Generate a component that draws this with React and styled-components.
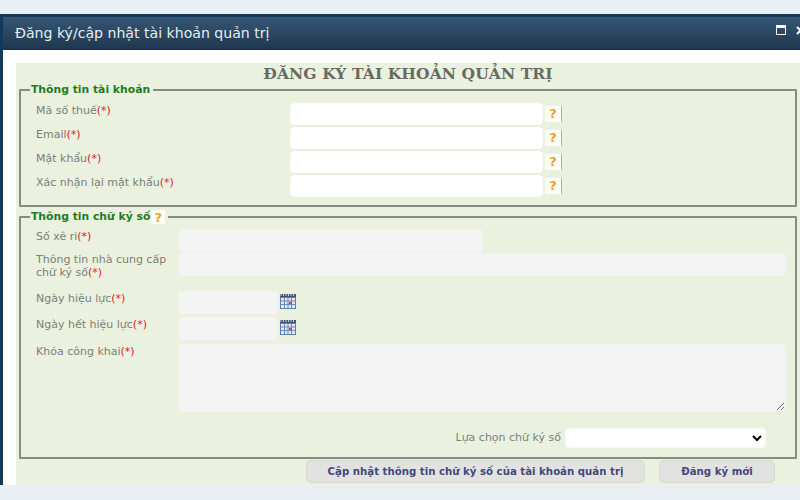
import React from "react"
import styled, { createGlobalStyle } from "styled-components"

const GlobalStyle = createGlobalStyle`
  html, body {
    margin: 0;
    padding: 0;
    height: 500px;
    overflow: hidden;
    background: #e9eff3;
  }
  body {
    font-family: "DejaVu Sans", "Noto Sans", sans-serif;
  }
`

const Page = styled.div`
  width: 800px;
  height: 500px;
  padding-top: 14px;
  box-sizing: border-box;
  overflow: hidden;
`

const Dialog = styled.div`
  width: 830px;
  height: 471px;
  box-sizing: border-box;
  background: #fff;
  border-top: 3px solid #123a5c;
  border-left: 3px solid #123a5c;
  display: flex;
  flex-direction: column;
`

const TitleBar = styled.div`
  height: 33px;
  flex: none;
  display: flex;
  align-items: center;
  padding: 0 0 0 12px;
  box-sizing: border-box;
  background: linear-gradient(#365675, #1f3850);
  border-bottom: 1px solid #1a2f44;
  color: #e8edf2;
  font-family: "DejaVu Sans", sans-serif;
  font-size: 14.1px;
`

const TitleText = styled.span`
  flex: 1;
`

const WindowIcons = styled.div`
  width: 54px;
  display: flex;
  align-items: center;
  gap: 10px;
  margin-top: -6px;
  color: #fff;
`

const Body = styled.div`
  flex: 1;
  padding: 13px 0 0 13px;
  min-height: 0;
`

const Panel = styled.div`
  width: 784px;
  height: 422px;
  box-sizing: border-box;
  background: #eaf1de;
  padding: 0 3px;
`

const Heading = styled.h1`
  margin: 0;
  height: 20px;
  text-align: center;
  font-family: "DejaVu Serif", serif;
  font-weight: bold;
  font-size: 15.5px;
  line-height: 22px;
  letter-spacing: 0.1px;
  color: #666b63;
`

const Group = styled.fieldset`
  margin: 0 0 ${p => p.$gap || 0}px 0;
  padding: 0 0 0 15px;
  width: 778px;
  height: ${p => p.$height}px;
  box-sizing: border-box;
  border: 2px solid #858b7d;
  border-radius: 1px;
  min-inline-size: 0;
`

const Legend = styled.legend`
  margin-left: -6px;
  padding: 0 3px 0 1px;
  font-size: 10.8px;
  font-weight: bold;
  line-height: 14px;
  color: #1d7d22;
  display: flex;
  align-items: center;
`

const Label = styled.label`
  display: block;
  color: #7b7f78;
  font-size: 11px;
  line-height: 13px;
`

const Req = styled.span`
  color: #e0202a;
`

const AccountRow = styled.div`
  display: grid;
  grid-template-columns: 254px 253px 17px;
  height: ${p => p.$height || 24}px;
  align-items: start;
`

const AccountRows = styled.div`
  padding-top: 6px;
`

const RowLabel = styled(Label)`
  padding-top: 1px;
`

const TextBox = styled.input`
  display: block;
  box-sizing: border-box;
  width: ${p => p.$width || 253}px;
  height: ${p => p.$height || 22}px;
  border: 1px solid ${p => (p.disabled ? "#f3f4f3" : "#fbfcfa")};
  border-radius: 4px;
  background: ${p => (p.disabled ? "#f3f4f3" : "#fff")};
  padding: 0 4px;
  outline: none;
`

const Help = styled.span`
  display: block;
  box-sizing: border-box;
  width: ${p => p.$width || 17}px;
  height: ${p => p.$height || 16}px;
  margin: ${p => p.$margin || "3px 0 0 2px"};
  background: #fdfdf8;
  border-right: ${p => (p.$plain ? 0 : "1px solid #aeb2a4")};
  color: #e8a52a;
  font-family: "DejaVu Sans", sans-serif;
  font-size: 13px;
  font-weight: bold;
  line-height: 16px;
  text-align: center;
`

const SignRows = styled.div`
  padding-top: 5px;
`

const SignRow = styled.div`
  display: grid;
  grid-template-columns: 142px 1fr;
  height: ${p => p.$height}px;
  align-items: start;
`

const FieldWrap = styled.div`
  display: flex;
  align-items: flex-start;
  gap: 2px;
`

const CalendarButton = styled.span`
  display: block;
  width: 16px;
  height: 15px;
  margin-top: 3px;
`

const PublicKey = styled.textarea`
  display: block;
  box-sizing: border-box;
  width: 608px;
  height: 68px;
  border: 1px solid #f3f4f3;
  border-radius: 4px;
  background: #f3f4f3;
  outline: none;
`

const SelectRow = styled.div`
  display: flex;
  justify-content: flex-end;
  align-items: center;
  gap: 4px;
  height: 19px;
  margin-top: 16px;
  padding-right: 29px;
`

const SignSelect = styled.select`
  width: 201px;
  height: 20px;
  box-sizing: border-box;
  border: 1px solid #f9faf7;
  border-radius: 4px;
  background: #fff;
  outline: none;
  color: #000;
`

const Actions = styled.div`
  display: flex;
  gap: 14px;
  padding: 1px 0 0 287px;
`

const ActionButton = styled.button`
  width: ${p => p.$width}px;
  height: 23px;
  padding: 0;
  box-sizing: border-box;
  border: 1px solid #d6dad0;
  border-radius: 5px;
  background: #e2e3e1;
  color: #45487c;
  font-family: "DejaVu Sans", sans-serif;
  font-size: 10.2px;
  font-weight: bold;
`

const Calendar = () => (
  <svg width="16" height="15" viewBox="0 0 16 15">
    <rect x="0" y="0" width="16" height="15" fill="#5f7fa8" />
    <rect x="0" y="0" width="16" height="3" fill="#47536a" />
    <path d="M1 0v2M3.5 0v2M6 0v2M8.5 0v2M11 0v2M13.5 0v2" stroke="#c8ccd4" strokeWidth="1" />
    <rect x="1" y="4" width="14" height="10" fill="#dfe7f3" />
    <path d="M1 7h14M1 10.500h14M4.500 4v10M8 4v10M11.500 4v10" stroke="#6d8bb5" strokeWidth="1" />
    <rect x="9" y="8" width="3" height="2" fill="#c9444a" />
  </svg>
)

const Required = () => <Req>(*)</Req>

const accountFields = ["Mã số thuế", "Email", "Mật khẩu", "Xác nhận lại mật khẩu"]

export default function App() {
  return (
    <Page>
      <GlobalStyle />
      <Dialog>
        <TitleBar>
          <TitleText>Đăng ký/cập nhật tài khoản quản trị</TitleText>
          <WindowIcons>
            <svg width="10" height="10" viewBox="0 0 10 10">
              <rect x="0.5" y="0.5" width="9" height="9" fill="none" stroke="#fff" />
              <rect x="0" y="0" width="10" height="3" fill="#fff" />
            </svg>
            <svg width="9" height="9" viewBox="0 0 9 9">
              <path d="M1 1l7 7M8 1l-7 7" stroke="#fff" strokeWidth="2" />
            </svg>
          </WindowIcons>
        </TitleBar>
        <Body>
          <Panel>
            <Heading>ĐĂNG KÝ TÀI KHOẢN QUẢN TRỊ</Heading>
            <Group $height={124} $gap={3}>
              <Legend>Thông tin tài khoản</Legend>
              <AccountRows>
                {accountFields.map(name => (
                  <AccountRow key={name}>
                    <RowLabel>
                      {name}
                      <Required />
                    </RowLabel>
                    <TextBox type="text" />
                    <Help>?</Help>
                  </AccountRow>
                ))}
              </AccountRows>
            </Group>
            <Group $height={249}>
              <Legend>
                Thông tin chữ ký số
                <Help $plain $width={14} $height={14} $margin="0 0 0 1px">?</Help>
              </Legend>
              <SignRows>
                <SignRow $height={24}>
                  <RowLabel>
                    Số xê ri
                    <Required />
                  </RowLabel>
                  <TextBox type="text" disabled $width={305} $height={23} />
                </SignRow>
                <SignRow $height={38}>
                  <Label>
                    Thông tin nhà cung cấp
                    <br />
                    chữ ký số
                    <Required />
                  </Label>
                  <TextBox type="text" disabled $width={608} $height={23} />
                </SignRow>
                <SignRow $height={26}>
                  <RowLabel>
                    Ngày hiệu lực
                    <Required />
                  </RowLabel>
                  <FieldWrap>
                    <TextBox type="text" disabled $width={100} $height={23} />
                    <CalendarButton>
                      <Calendar />
                    </CalendarButton>
                  </FieldWrap>
                </SignRow>
                <SignRow $height={27}>
                  <RowLabel>
                    Ngày hết hiệu lực
                    <Required />
                  </RowLabel>
                  <FieldWrap>
                    <TextBox type="text" disabled $width={100} $height={23} />
                    <CalendarButton>
                      <Calendar />
                    </CalendarButton>
                  </FieldWrap>
                </SignRow>
                <SignRow $height={68}>
                  <RowLabel>
                    Khóa công khai
                    <Required />
                  </RowLabel>
                  <PublicKey disabled />
                </SignRow>
                <SelectRow>
                  <Label>Lựa chọn chữ ký số</Label>
                  <SignSelect>
                    <option></option>
                  </SignSelect>
                </SelectRow>
              </SignRows>
            </Group>
            <Actions>
              <ActionButton $width={339}>Cập nhật thông tin chữ ký số của tài khoản quản trị</ActionButton>
              <ActionButton $width={116}>Đăng ký mới</ActionButton>
            </Actions>
          </Panel>
        </Body>
      </Dialog>
    </Page>
  )
}
